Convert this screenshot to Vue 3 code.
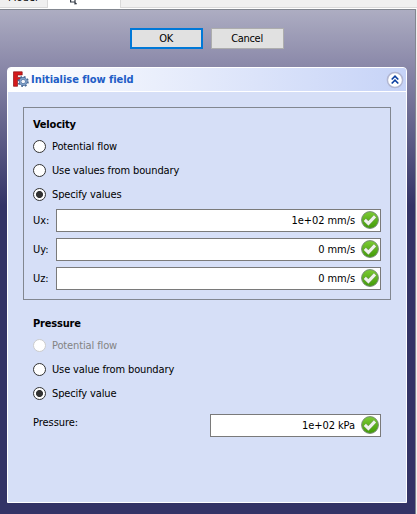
<script setup>
import { ref } from 'vue'

const velocityMode = ref('specify')
const pressureMode = ref('specify')

const velocityOptions = [
  { id: 'potential', label: 'Potential flow' },
  { id: 'boundary', label: 'Use values from boundary' },
  { id: 'specify', label: 'Specify values' },
]
const pressureOptions = [
  { id: 'potential', label: 'Potential flow', disabled: true },
  { id: 'boundary', label: 'Use value from boundary' },
  { id: 'specify', label: 'Specify value' },
]
const components = [
  { label: 'Ux:', value: '1e+02 mm/s' },
  { label: 'Uy:', value: '0 mm/s' },
  { label: 'Uz:', value: '0 mm/s' },
]
</script>

<template>
  <div class="window">
    <svg width="0" height="0" class="defs">
      <defs>
        <linearGradient id="green" x1="0" y1="0" x2="0" y2="1">
          <stop offset="0" stop-color="#7dcb35" />
          <stop offset="1" stop-color="#409a06" />
        </linearGradient>
        <symbol id="ok-mark" viewBox="0 0 18 18">
          <circle cx="9" cy="9" r="8.4" fill="url(#green)" stroke="#788c78" stroke-width="1" />
          <path d="M3.8 8.8 7.4 12.3 14 5.4" fill="none" stroke="#6c9a50" stroke-width="4.2" />
          <path d="M3.8 8.8 7.4 12.3 14 5.4" fill="none" stroke="#f0f3ed" stroke-width="3" />
        </symbol>
      </defs>
    </svg>

    <nav class="tabs">
      <div class="tab"><span class="tab-text">Model</span></div>
      <div class="tab active">
        <svg width="8" height="6" viewBox="0 0 8 6">
          <path d="M.6 0V2H4M5 0V4.6M4 1.6 6.6 4.2" fill="none" stroke="#333a44" stroke-width="1.2" />
        </svg>
      </div>
      <div class="tab rest"></div>
    </nav>

    <main class="area">
      <div class="buttons">
        <button class="btn default">OK</button>
        <button class="btn">Cancel</button>
      </div>

      <section class="panel">
        <header class="head">
          <svg class="logo" width="16" height="17" viewBox="0 0 16 17">
            <path d="M.5.8H9.2V4H4.5V6.4H7.5V9.4H4.5V15.3H.5Z" fill="#d5191b" stroke="#8c1216" stroke-width=".7" />
            <circle cx="10.2" cy="10.5" r="4.5" fill="none" stroke="#496a96" stroke-width="2.2" stroke-dasharray="1.8 1.734" />
            <circle cx="10.2" cy="10.5" r="3" fill="none" stroke="#4a6b99" stroke-width="2.8" />
            <circle cx="10.2" cy="10.5" r="3" fill="none" stroke="#7f9fc8" stroke-width="1.5" />
            <circle cx="10.2" cy="10.5" r="1.7" fill="#f4f6fc" />
          </svg>
          <h1 class="title">Initialise flow field</h1>
          <svg class="fold" width="18" height="18" viewBox="0 0 18 18">
            <circle cx="9" cy="9" r="7.6" fill="#fff" stroke="#b2b7d2" stroke-width="1.5" />
            <path d="M5.7 8.5 9 5.2 12.3 8.5M5.7 12.5 9 9.2 12.3 12.5" fill="none" stroke="#0b3fa0" stroke-width="1.6" />
          </svg>
        </header>

        <div class="body">
          <div class="group framed">
            <h2 class="name">Velocity</h2>
            <label v-for="o in velocityOptions" :key="o.id" class="radio" @click="velocityMode = o.id">
              <span class="dot" :class="{ on: velocityMode === o.id }"></span>
              <span class="txt">{{ o.label }}</span>
            </label>
            <div class="fields">
              <div v-for="c in components" :key="c.label" class="field">
                <span class="key">{{ c.label }}</span>
                <div class="input">
                  <span class="val">{{ c.value }}</span>
                  <svg width="18" height="18"><use href="#ok-mark" /></svg>
                </div>
              </div>
            </div>
          </div>

          <div class="group">
            <h2 class="name">Pressure</h2>
            <label
              v-for="o in pressureOptions"
              :key="o.id"
              class="radio"
              :class="{ disabled: o.disabled }"
              @click="o.disabled || (pressureMode = o.id)"
            >
              <span class="dot" :class="{ on: pressureMode === o.id }"></span>
              <span class="txt">{{ o.label }}</span>
            </label>
            <div class="field single">
              <span class="key">Pressure:</span>
              <div class="input">
                <span class="val">1e+02 kPa</span>
                <svg width="18" height="18"><use href="#ok-mark" /></svg>
              </div>
            </div>
          </div>
        </div>
      </section>
    </main>
  </div>
</template>

<style>
body {
  margin: 0;
  background: #f0f0f0;
}
</style>

<style scoped>
.window {
  width: 417px;
  height: 514px;
  overflow: hidden;
  display: flex;
  flex-direction: column;
  font-family: "DejaVu Sans Condensed", "Noto Sans", sans-serif;
  font-size: 11px;
  color: #000;
}
.window * {
  box-sizing: border-box;
}
.defs {
  position: absolute;
}
.tabs {
  display: flex;
  flex: none;
  height: 9px;
  background: #fff;
}
.tab {
  width: 48px;
  height: 8px;
  overflow: hidden;
  background: #f0f0f0;
  border-right: 1px solid #d9d9d9;
  border-bottom: 1px solid #d9d9d9;
}
.tab-text {
  display: block;
  margin: -9px 0 0 8px;
  line-height: 14px;
}
.tab.active {
  width: 72px;
  background: #fff;
  border: 0;
  padding-left: 22px;
}
.tab.active svg {
  display: block;
}
.tab.rest {
  flex: 1;
  border-right: 0;
  border-left: 1px solid #d9d9d9;
}
.area {
  flex: 1;
  width: 416px;
  border-top: 1px solid #828790;
  border-right: 1px solid #828790;
  padding: 18px 8px 0 7px;
  background: linear-gradient(#adadc2 0, #8987a8 58px, #333366 196px);
}
.buttons {
  display: flex;
  justify-content: center;
  gap: 8px;
  padding-right: 1px;
}
.btn {
  width: 73px;
  height: 21px;
  padding: 0;
  border: 1px solid #adadad;
  background: #e1e1e1;
  font: inherit;
  letter-spacing: -0.3px;
  color: #000;
}
.btn.default {
  border: 2px solid #0078d7;
}
.panel {
  margin-top: 18px;
  height: 436px;
  width: 400px;
  border: 1px solid #fff;
  border-radius: 4px 4px 0 0;
  overflow: hidden;
  background: #d6dff7;
}
.head {
  display: flex;
  align-items: center;
  height: 24px;
  padding: 0 2px 0 5px;
  border-bottom: 1px solid #fff;
  background: linear-gradient(90deg, #fff, #c6d3f7);
}
.title {
  margin: 0 auto 0 2px;
  font-size: 11px;
  line-height: 16px;
  letter-spacing: -0.05px;
  color: #215dc6;
}
.body {
  padding: 15px;
}
.group {
  padding: 9px 9px 0 10px;
}
.group.framed {
  width: 368px;
  height: 193px;
  margin-bottom: 6px;
  padding: 8px 9px 0;
  border: 1px solid #828790;
}
.name {
  margin: 0 0 1px;
  font-size: 11px;
  line-height: 17px;
  letter-spacing: -0.2px;
}
.radio {
  display: flex;
  align-items: center;
  gap: 6px;
  height: 24px;
}
.dot {
  width: 13px;
  height: 13px;
  border: 1px solid #333;
  border-radius: 50%;
  background: #fff;
}
.dot.on {
  background: radial-gradient(circle, #333 3.1px, #fff 3.9px);
}
.txt {
  letter-spacing: -0.13px;
}
.disabled .txt {
  color: #838383;
}
.disabled .dot {
  border-color: #ccc;
}
.fields {
  display: flex;
  flex-direction: column;
  gap: 6px;
  margin-top: 3px;
}
.field {
  display: flex;
  align-items: center;
}
.key {
  width: 23px;
  letter-spacing: -0.05px;
  white-space: nowrap;
}
.input {
  width: 325px;
  height: 23px;
  border: 1px solid #7a7a7a;
  background: #fff;
  display: flex;
  align-items: center;
  justify-content: flex-end;
  gap: 6px;
  padding: 0 1px 1px 0;
}
.val {
  letter-spacing: -0.08px;
}
.input svg {
  flex: none;
}
.single {
  margin-top: 9px;
}
.single .key {
  width: 177px;
  padding-bottom: 6px;
}
.single .input {
  width: 171px;
}
</style>
